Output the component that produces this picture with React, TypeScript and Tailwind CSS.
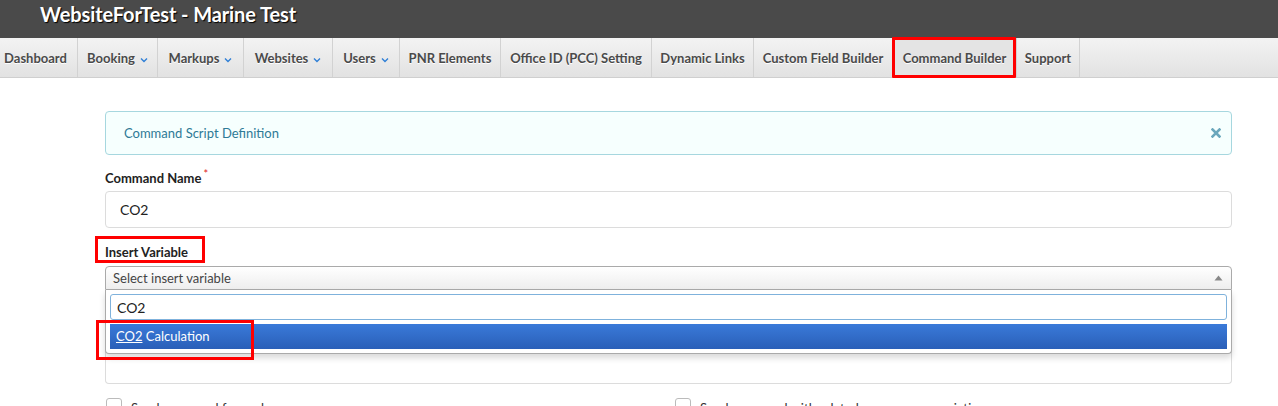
import React from "react";

const Chev = () => (
  <svg width="8" height="6" viewBox="0 0 8 6" className="ml-[5px] mt-[2px]">
    <path d="M1 1.5 L4 4.5 L7 1.5" stroke="#2f7fd6" strokeWidth="1.4" fill="none" />
  </svg>
);

const navItems: { label: string; chev?: boolean; w: number; active?: boolean }[] = [
  { label: "Dashboard", w: 78 },
  { label: "Booking", chev: true, w: 80 },
  { label: "Markups", chev: true, w: 86 },
  { label: "Websites", chev: true, w: 89 },
  { label: "Users", chev: true, w: 67 },
  { label: "PNR Elements", w: 101 },
  { label: "Office ID (PCC) Setting", w: 151 },
  { label: "Dynamic Links", w: 102 },
  { label: "Custom Field Builder", w: 139 },
  { label: "Command Builder", w: 124, active: true },
  { label: "Support", w: 63 },
];

export default function App() {
  return (
    <div className="w-[1278px] h-[406px] overflow-hidden bg-white" style={{ fontFamily: "Lato, 'Open Sans', sans-serif" }}>
      <div className="h-[38px] bg-[#4a4a4a] pl-[40px] flex items-center">
        <span className="text-white font-bold text-[20px] tracking-[-0.1px] leading-none mt-[-10px] [text-shadow:1px_1px_1px_#000]">
          WebsiteForTest - Marine Test
        </span>
      </div>
      <div className="h-[40px] flex bg-gradient-to-b from-[#f3f3f3] to-[#e2e2e2] border-b border-[#cfcfcf]">
        {navItems.map((n, i) => (
          <div
            key={n.label}
            className={`relative h-full flex items-center justify-center pt-[2px] border-r border-[#d2d2d2] text-[13px] font-bold text-[#4a4a4a] [text-shadow:0_1px_0_#fff] ${n.active ? "bg-[#e4e4e4]" : ""} ${i === 0 ? "pr-[6px]" : ""}`}
            style={{ width: n.w }}
          >
            {n.label}
            {n.chev && <Chev />}
            {n.active && <div className="absolute inset-[-1px_0_-1px_-1px] border-[3px] border-[#ff0000] rounded-[1px]" />}
          </div>
        ))}
      </div>

      <div className="pl-[105px] pr-[46px] pt-[33px]">
        <div className="h-[44px] rounded-[4px] border border-[#a6d7df] bg-[#f6fffe] flex items-center justify-between pl-[18px] pr-[10px]">
          <span className="text-[13px] text-[#2e7a96] mt-[1px]">Command Script Definition</span>
          <svg width="10" height="10" viewBox="0 0 10 10">
            <path d="M1.5 1.5 L8.5 8.5 M8.5 1.5 L1.5 8.5" stroke="#6aa7bc" strokeWidth="2.6" strokeLinecap="square" />
          </svg>
        </div>

        <div className="mt-[15px] text-[13px] font-bold text-[#222] leading-[16px]">
          Command Name<sup className="text-[#e02020] font-normal ml-[2px] text-[11px]">*</sup>
        </div>
        <div className="mt-[5px] h-[37px] border border-[#dcdcdc] rounded-[4px] flex items-center pl-[14px] text-[14px] text-[#222]">
          CO2
        </div>

        <div className="relative mt-[16px] h-[16px] text-[13px] font-bold text-[#222] leading-[16px]">
          Insert Variable
          <div className="absolute left-[-10px] top-[-8px] w-[110px] h-[27px] border-[3px] border-[#ff0000]" />
        </div>

        <div className="relative mt-[6px]">
          <div className="h-[24px] border border-[#aaa] rounded-t-[4px] bg-gradient-to-b from-[#fff] to-[#eee] flex items-center justify-between pl-[7px] pr-[8px]">
            <span className="text-[13px] text-[#444] mt-[2px]">Select insert variable</span>
            <svg width="9" height="6" viewBox="0 0 9 6">
              <path d="M0.5 5.5 L4.5 0.5 L8.5 5.5 Z" fill="#888" />
            </svg>
          </div>
          <div className="h-[94px] border border-[#dcdcdc] border-t-0 rounded-b-[4px]" />

          <div className="absolute left-0 right-0 top-[24px] h-[64px] bg-white border border-[#aaa] border-t-0 rounded-b-[4px] shadow-[0_4px_6px_rgba(0,0,0,0.15)] px-[4px] pt-[4px]">
            <div className="h-[26px] border border-[#7fb2dc] rounded-[3px] flex items-center pl-[6px] text-[14px] text-[#222]">
              CO2
            </div>
            <div className="mt-[4px] h-[25px] bg-gradient-to-b from-[#3a7ad9] to-[#2a5fb8] flex items-center pl-[6px] text-[13px] text-white">
              <span className="underline">CO2</span>&nbsp;Calculation
            </div>
            <div className="absolute left-[-10px] top-[30px] w-[158px] h-[40px] border-[3px] border-[#ff0000]" />
          </div>
        </div>

        <div className="mt-[14px] flex text-[13px] text-[#333]">
          <div className="w-[570px] flex items-start">
            <div className="w-[16px] h-[16px] border border-[#bbb] rounded-[3px] ml-[1px]" />
            <span className="ml-[9px] mt-[1px]">Send command for each passenger</span>
          </div>
          <div className="flex items-start">
            <div className="w-[16px] h-[16px] border border-[#bbb] rounded-[3px]" />
            <span className="ml-[9px] mt-[1px]">Send command with related passenger association</span>
          </div>
        </div>
      </div>
    </div>
  );
}
